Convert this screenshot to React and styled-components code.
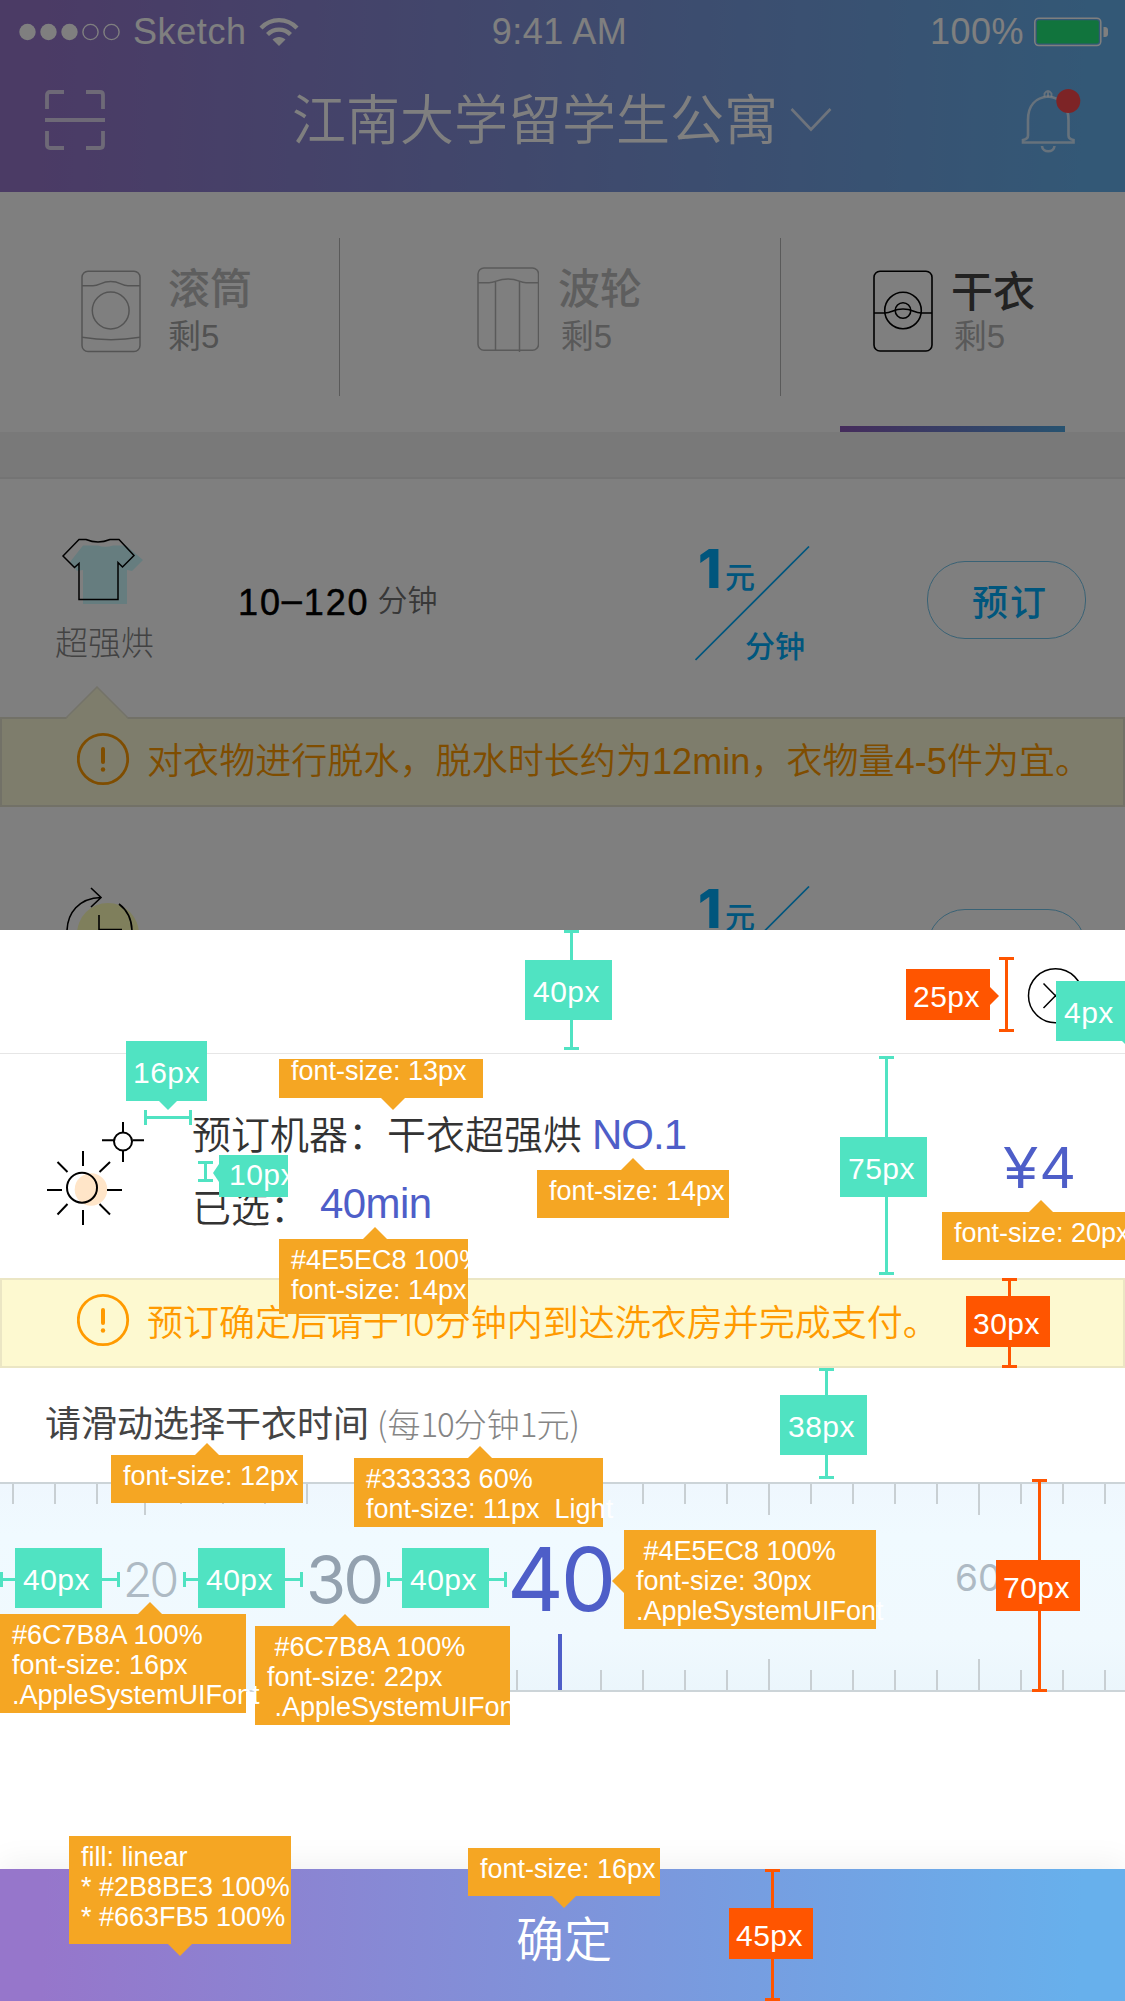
import React from "react";
import styled, { createGlobalStyle, css } from "styled-components";

const GlobalStyle = createGlobalStyle`
  * { box-sizing: border-box; }
  body {
    margin: 0;
    background: #fff;
    font-family: "Liberation Sans", "Noto Sans CJK SC", sans-serif;
  }
  svg { display: block; flex: none; }
`;

const BRAND_GRADIENT = "linear-gradient(92deg, #9676cb 4%, #7f93da 50%, #67b0ec 96%)";

const Screen = styled.div`
  position: relative;
  width: 1125px;
  height: 2001px;
  overflow: hidden;
  background: #fff;
  white-space: nowrap;
`;

/* ---------- page behind the sheet ---------- */

const Page = styled.div`
  position: relative;
  height: 930px;
  overflow: hidden;
  background: #fff;
`;

const Dim = styled.div`
  position: absolute;
  inset: 0;
  background: rgba(0, 0, 0, 0.5);
`;

const Header = styled.header`
  height: 192px;
  background: ${BRAND_GRADIENT};
  color: #fff;
`;

const StatusBar = styled.div`
  display: grid;
  grid-template-columns: 1fr auto 1fr;
  align-items: center;
  height: 62px;
  padding: 0 16px 0 19px;
  font-size: 36px;
  line-height: 62px;
`;

const StatusGroup = styled.div`
  display: flex;
  align-items: center;
  justify-content: ${(p) => (p.$end ? "flex-end" : "flex-start")};
  gap: ${(p) => p.$gap}px;
`;

const StatusText = styled.span`
  padding-top: 1px;
  margin-right: ${(p) => p.$right || 0}px;
  letter-spacing: ${(p) => p.$track || 0}px;
`;

const NavBar = styled.div`
  display: grid;
  grid-template-columns: 247px 1fr 104px;
  align-items: center;
  height: 116px;
  padding-left: 45px;
`;

const NavTitle = styled.h1`
  display: flex;
  align-items: center;
  gap: 12px;
  margin: 0;
  padding-top: 2px;
  font-size: 54px;
  line-height: 60px;
  font-weight: 350;
`;

const Tabs = styled.nav`
  display: grid;
  grid-template-columns: 340px 441px 344px;
  height: 240px;
`;

const Tab = styled.div`
  position: relative;
  display: flex;
  align-items: flex-start;
  gap: ${(p) => p.$gap}px;
  padding: ${(p) => p.$top}px 0 0 ${(p) => p.$left}px;

  &:not(:last-child)::after {
    content: "";
    position: absolute;
    right: 0;
    top: 46px;
    width: 1.5px;
    height: 158px;
    background: #b4b4b4;
  }
`;

const TabText = styled.div`
  display: flex;
  flex-direction: column;
  margin-top: ${(p) => p.$shift}px;
`;

const TabName = styled.span`
  font-size: 42px;
  line-height: 46px;
  font-weight: 500;
  color: ${(p) => (p.$active ? "#444" : "#bdbdbd")};
`;

const TabCount = styled.span`
  font-size: 33px;
  line-height: 40px;
  margin-top: ${(p) => p.$gap}px;
  color: ${(p) => p.$color};
`;

const ActiveBar = styled.div`
  position: absolute;
  left: 59px;
  bottom: 0;
  width: 225px;
  height: 6px;
  background: linear-gradient(90deg, #8b58b8, #4fa5e0);
`;

const Band = styled.div`
  height: 47px;
  background: #f2f2f2;
  border-bottom: 2px solid #e9e9e9;
`;

const Program = styled.section`
  display: grid;
  grid-template-columns: 208px 487px 232px auto;
  height: 238px;
`;

const ProgramIcon = styled.div`
  display: flex;
  flex-direction: column;
  align-items: flex-start;
  padding: ${(p) => p.$top}px 0 0 55px;
  font-size: 33px;
  line-height: 40px;
  font-weight: 300;
  color: #858585;

  span { margin: 18px 0 0 0; }
`;

const Duration = styled.div`
  display: flex;
  align-items: center;
  gap: 8px;
  height: 40px;
  margin: 102px 0 0 30px;
  font-size: 36px;
  line-height: 40px;
  letter-spacing: 1.9px;
  color: #000;
  -webkit-text-stroke: 0.5px #000;

  i {
    font-style: normal;
    vertical-align: 3px;
  }

  small {
    font-size: 30px;
    letter-spacing: 0;
    font-weight: 350;
    color: #707070;
    -webkit-text-stroke: 0;
  }
`;

const Price = styled.div`
  display: grid;
  grid-template-areas: "cell";
  width: 115px;
  height: 115px;
  margin-top: ${(p) => p.$top}px;
  color: #00acfb;
  font-size: 30px;
  line-height: 40px;
  font-weight: 500;

  > * { grid-area: cell; }
`;

const Amount = styled.span`
  display: flex;
  align-items: baseline;
  align-self: start;
  padding-left: 3px;

  b {
    width: 27px;
    font-family: Inter, sans-serif;
    font-size: 53px;
    line-height: 46px;
    font-weight: 800;
  }
`;

const Unit = styled.span`
  align-self: end;
  justify-self: end;
  margin: 0 5px -6px 0;
`;

const BookButton = styled.button`
  width: 159px;
  height: 78px;
  margin-top: ${(p) => p.$top}px;
  padding: 5px 0 0 7px;
  border: 1.5px solid #72c4ea;
  border-radius: 38px;
  background: none;
  color: #00acfb;
  font: 500 36px/74px "Liberation Sans", "Noto Sans CJK SC", sans-serif;
  letter-spacing: 2px;
`;

const Notice = styled.div`
  position: relative;
  display: flex;
  align-items: flex-start;
  gap: 16px;
  height: 90px;
  padding: 13px 0 0 75px;
  background: #fdf9d0;
  border: 2px solid #ebe6c4;
  color: #ff9a00;
  font-size: 36px;
  line-height: 54px;
  font-weight: 350;

  > span { padding-top: 3px; }

  ${(p) => p.$muted && css`
    background: #fdfbd9;
    border-color: #e4e2ce;
    letter-spacing: 0.07px;
  `}

  i {
    font-family: Inter, sans-serif;
    font-weight: 300;
    font-style: normal;
    letter-spacing: -0.4px;
  }
`;

const Pointer = styled.svg`
  position: absolute;
  left: 61px;
  top: -33px;
`;

/* ---------- booking sheet ---------- */

const Sheet = styled.main`
  display: flex;
  flex-direction: column;
  height: 1071px;
  background: #fff;
`;

const SheetTop = styled.div`
  display: flex;
  justify-content: flex-end;
  height: 124px;
  padding: 37px 41px 0 0;
  border-bottom: 1.5px solid #e6e6e6;
`;

const Order = styled.section`
  display: grid;
  grid-template-columns: 146px 812px auto;
  height: 224px;
  padding-left: 46px;
`;

const OrderText = styled.div`
  padding-top: 55px;
  font-size: 39px;
  line-height: 54px;
  font-weight: 350;
  color: #333;

  p {
    display: flex;
    margin: 0 0 19px;
  }
`;

const Accent = styled.span`
  margin: -${(p) => p.$lift || 0}px 0 0 ${(p) => p.$left}px;
  font-size: 42px;
  letter-spacing: ${(p) => p.$track || 0}px;
  color: #4e5ec8;
`;

const Total = styled.div`
  padding-top: 82px;
  font-size: 60px;
  line-height: 64px;
  letter-spacing: 4px;
  color: #4e5ec8;
`;

const Prompt = styled.div`
  display: flex;
  gap: 8px;
  height: 114px;
  padding: 30px 0 0 45px;
  font-size: 36px;
  line-height: 54px;
  color: #444;

  small {
    font-family: "Noto Sans CJK SC", sans-serif;
    font-size: 33px;
    line-height: 51px;
    font-weight: 300;
    color: #858585;
  }

  i {
    font-style: normal;
    letter-spacing: -1px;
  }
`;

const Ruler = styled.section`
  display: flex;
  flex-direction: column;
  justify-content: space-between;
  height: 210px;
  border-top: 2.5px solid #ccd4d8;
  border-bottom: 2.5px solid #ccd4d8;
  background: linear-gradient(180deg, #eff7fe 0%, #f0faff 25%, #f0f9fe 75%, #ebf6fc 100%);
`;

const Ticks = styled.div`
  display: flex;
  align-items: ${(p) => (p.$bottom ? "flex-end" : "flex-start")};
  gap: 40px;
  height: 32px;
  padding-left: 12px;
  overflow: visible;
`;

const Tick = styled.span`
  flex: none;
  width: 2px;
  height: ${(p) => (p.$long ? 31 : 20)}px;
  background: #c8cfd3;

  ${(p) => p.$nudge && css`
    margin: 0 -6px 0 6px;
  `}

  ${(p) => p.$current && css`
    width: 4px;
    height: 56px;
    margin-right: -2px;
    background: #4e5ec8;
  `}
`;

const Values = styled.div`
  display: grid;
  grid-template-columns: 183px 201px 448px auto;
  align-items: center;
  height: 100px;
  padding: 0 0 14px 123px;
`;

const Value = styled.span`
  font-family: Inter, sans-serif;
  font-size: ${(p) => p.$size}px;
  line-height: 1;
  margin-top: -${(p) => p.$lift || 0}px;
  letter-spacing: ${(p) => p.$track || 0}px;
  color: ${(p) => p.$color};
  font-weight: ${(p) => p.$weight || 400};
`;

const Spacer = styled.div`
  flex: 1;
`;

const Confirm = styled.button`
  height: 132px;
  padding: 3px 0 0 3px;
  border: 0;
  background: ${BRAND_GRADIENT};
  box-shadow: 0 -6px 30px rgba(0, 0, 0, 0.06);
  color: #fff;
  font: 350 48px/138px "Liberation Sans", "Noto Sans CJK SC", sans-serif;
  text-align: center;
`;

/* ---------- specification marks laid over the screen ---------- */

const TONES = { teal: "#50e3c2", red: "#ff5500", orange: "#f5a623" };

const TagBox = styled.div`
  position: absolute;
  left: ${(p) => p.$x}px;
  top: ${(p) => p.$y}px;
  width: ${(p) => p.$w}px;
  height: ${(p) => p.$h}px;
  overflow: ${(p) => (p.$clip ? "hidden" : "visible")};
  background: ${(p) => TONES[p.$tone]};
  color: #fff;
  white-space: pre;
  ${(p) => p.$tone === "orange"
    ? css`
        padding: 6px 0 0 12px;
        font-size: 27px;
        line-height: 30px;
      `
    : css`
        padding: ${p.$tone === "teal" ? "15px 0 0 8px" : "11px 0 0 7px"};
        font-size: 30px;
        line-height: 34px;
        letter-spacing: 0.5px;
      `}

  span {
    display: block;
    margin-top: ${(p) => p.$lift || 0}px;
    margin-left: ${(p) => p.$indent || 0}px;
  }
`;

const ARROWS = {
  up: "polygon(50% 0, 100% 100%, 0 100%)",
  down: "polygon(0 0, 100% 0, 50% 100%)",
  left: "polygon(0 50%, 100% 0, 100% 100%)",
  right: "polygon(0 0, 100% 50%, 0 100%)",
};

const Arrow = styled.div`
  position: absolute;
  left: ${(p) => p.$x}px;
  top: ${(p) => p.$y}px;
  width: ${(p) => p.$w}px;
  height: ${(p) => p.$h}px;
  background: ${(p) => TONES[p.$tone]};
  clip-path: ${(p) => ARROWS[p.$dir]};
`;

const Span = styled.div`
  position: absolute;
  left: ${(p) => p.$x}px;
  top: ${(p) => p.$y}px;
  color: ${(p) => TONES[p.$tone]};
  ${(p) => p.$vertical
    ? css`
        width: 15px;
        height: ${p.$len}px;
        border-top: 3px solid;
        border-bottom: 3px solid;
        background: linear-gradient(currentColor, currentColor) center / 3px 100% no-repeat;
      `
    : css`
        width: ${p.$len}px;
        height: 15px;
        border-left: 3px solid;
        border-right: 3px solid;
        background: linear-gradient(currentColor, currentColor) center / 100% 3px no-repeat;
      `}
`;

const SPANS = [
  { tone: "teal", x: 564, y: 930, len: 120, vertical: true },
  { tone: "red", x: 999, y: 957, len: 75, vertical: true },
  { tone: "teal", x: 144, y: 1110, len: 48 },
  { tone: "teal", x: 198, y: 1161, len: 21, vertical: true },
  { tone: "teal", x: 879, y: 1056, len: 219, vertical: true },
  { tone: "red", x: 1002, y: 1278, len: 90, vertical: true },
  { tone: "teal", x: 819, y: 1368, len: 111, vertical: true },
  { tone: "teal", x: 0, y: 1572, len: 120 },
  { tone: "teal", x: 183, y: 1572, len: 120 },
  { tone: "teal", x: 387, y: 1572, len: 120 },
  { tone: "red", x: 1032, y: 1479, len: 213, vertical: true },
  { tone: "red", x: 765, y: 1869, len: 132, vertical: true },
];

const TAGS = [
  { tone: "teal", x: 525, y: 960, w: 87, h: 60, text: "40px" },
  { tone: "red", x: 906, y: 969, w: 84, h: 51, text: "25px", arrow: ["right", 990, 987, 9, 18] },
  { tone: "teal", x: 1056, y: 981, w: 75, h: 60, text: "4px", arrow: ["down", 1122, 1041, 18, 9] },
  { tone: "teal", x: 126, y: 1041, w: 81, h: 60, indent: -1, text: "16px", arrow: ["down", 159, 1101, 18, 9] },
  { tone: "orange", x: 279, y: 1059, w: 204, h: 39, lift: -9, text: "font-size: 13px", arrow: ["down", 381, 1098, 24, 12] },
  { tone: "teal", x: 219, y: 1155, w: 69, h: 42, lift: -12, indent: 2, clip: true, text: "10px", arrow: ["left", 213, 1164, 6, 18] },
  { tone: "orange", x: 537, y: 1170, w: 192, h: 48, text: "font-size: 14px", arrow: ["up", 621, 1158, 24, 12] },
  { tone: "teal", x: 840, y: 1137, w: 87, h: 60, text: "75px" },
  { tone: "orange", x: 942, y: 1212, w: 192, h: 48, text: "font-size: 20px", arrow: ["up", 1029, 1200, 24, 12] },
  { tone: "orange", x: 279, y: 1239, w: 189, h: 75, clip: true, text: "#4E5EC8 100%\nfont-size: 14px", arrow: ["up", 363, 1227, 24, 12] },
  { tone: "red", x: 966, y: 1296, w: 84, h: 51, text: "30px" },
  { tone: "teal", x: 780, y: 1395, w: 87, h: 60, text: "38px" },
  { tone: "orange", x: 111, y: 1455, w: 192, h: 48, text: "font-size: 12px", arrow: ["up", 195, 1443, 24, 12] },
  { tone: "orange", x: 354, y: 1458, w: 249, h: 69, text: "#333333 60%\nfont-size: 11px  Light", arrow: ["up", 468, 1446, 24, 12] },
  { tone: "teal", x: 15, y: 1548, w: 87, h: 60, text: "40px" },
  { tone: "teal", x: 198, y: 1548, w: 87, h: 60, text: "40px" },
  { tone: "teal", x: 402, y: 1548, w: 87, h: 60, text: "40px" },
  { tone: "orange", x: 255, y: 1626, w: 255, h: 99, clip: true, text: " #6C7B8A 100%\nfont-size: 22px\n .AppleSystemUIFont", arrow: ["up", 333, 1614, 24, 12] },
  { tone: "orange", x: 0, y: 1614, w: 246, h: 99, text: "#6C7B8A 100%\nfont-size: 16px\n.AppleSystemUIFont", arrow: ["up", 138, 1602, 24, 12] },
  { tone: "orange", x: 624, y: 1530, w: 252, h: 99, text: " #4E5EC8 100%\nfont-size: 30px\n.AppleSystemUIFont", arrow: ["left", 612, 1569, 12, 24] },
  { tone: "red", x: 996, y: 1560, w: 84, h: 51, text: "70px" },
  { tone: "orange", x: 69, y: 1836, w: 222, h: 108, text: "fill: linear\n* #2B8BE3 100%\n* #663FB5 100%", arrow: ["down", 168, 1944, 24, 12] },
  { tone: "orange", x: 468, y: 1848, w: 192, h: 48, text: "font-size: 16px", arrow: ["down", 552, 1896, 24, 12] },
  { tone: "red", x: 729, y: 1908, w: 84, h: 51, text: "45px" },
];

function SpecMarks() {
  return (
    <>
      {SPANS.map((s, i) => (
        <Span key={i} $tone={s.tone} $x={s.x} $y={s.y} $len={s.len} $vertical={s.vertical} />
      ))}
      {TAGS.map((t, i) => (
        <React.Fragment key={i}>
          <TagBox
            $tone={t.tone}
            $x={t.x}
            $y={t.y}
            $w={t.w}
            $h={t.h}
            $lift={t.lift}
            $indent={t.indent}
            $clip={t.clip}
          >
            <span>{t.text}</span>
          </TagBox>
          {t.arrow && (
            <Arrow $tone={t.tone} $dir={t.arrow[0]} $x={t.arrow[1]} $y={t.arrow[2]} $w={t.arrow[3]} $h={t.arrow[4]} />
          )}
        </React.Fragment>
      ))}
    </>
  );
}

/* ---------- icons ---------- */

const SignalDots = () => (
  <svg width="102" height="18" viewBox="0 0 102 18">
    {[8.5, 29.5, 50.5].map((x) => <circle key={x} cx={x} cy="9" r="8.2" fill="#fff" />)}
    {[71.5, 92.5].map((x) => <circle key={x} cx={x} cy="9" r="7.6" fill="none" stroke="#fff" strokeWidth="1.4" />)}
  </svg>
);

const WifiIcon = () => (
  <svg width="40" height="30" viewBox="0 0 40 30">
    <path d="M2 11C12 0.500 28 0.500 38 11" fill="none" stroke="#fff" strokeWidth="4.200" />
    <path d="M8.500 17.500C15 11 25 11 31.500 17.500" fill="none" stroke="#fff" strokeWidth="4.200" />
    <path d="M13.500 22.500C17 19 23 19 26.500 22.500L20 29Z" fill="#fff" />
  </svg>
);

const BatteryIcon = () => (
  <svg width="75" height="30" viewBox="0 0 75 30">
    <rect x="0.800" y="1.200" width="66" height="27.400" rx="4" fill="none" stroke="#fff" strokeWidth="1.500" />
    <rect x="2.800" y="3.200" width="62" height="23.400" rx="2" fill="#23e97b" />
    <path d="M69.500 10H71c1.700 0 3 1.300 3 3v4c0 1.700-1.300 3-3 3h-1.500z" fill="#fff" />
  </svg>
);

const ScanIcon = () => (
  <svg width="60" height="61" viewBox="0 0 60 61" fill="none" stroke="#fff" strokeOpacity="0.68" strokeWidth="3.800">
    <path d="M2 19V5Q2 2 5 2H19M41 2H55Q58 2 58 5V19M58 41V55Q58 58 55 58H41M19 58H5Q2 58 2 55V41M0 30H60" />
  </svg>
);

const ChevronIcon = () => (
  <svg width="42" height="26" viewBox="0 0 42 26" fill="none" stroke="#fff" strokeOpacity="0.75" strokeWidth="2.600">
    <path d="M1.500 1L21 21.500L40.500 1" />
  </svg>
);

const BellIcon = () => (
  <svg width="62" height="66" viewBox="0 0 62 66">
    <g fill="none" stroke="#fff" strokeOpacity="0.68" strokeWidth="2.600">
      <path d="M7 48.500V33C7 18 15 10.500 27 9.500C39 10.500 47.500 18 47.500 33V48.500C47.500 51 49.500 52.500 52.500 53V55.500H2V53C5 52.500 7 51 7 48.500" />
      <path d="M23.500 10V6.500Q27 1.500 30.500 6.500V10M27 4V10" strokeWidth="1.800" />
      <path d="M21 59C21.500 66 33 66 33.500 59" />
    </g>
    <circle cx="47.300" cy="14" r="12" fill="#fa484c" />
  </svg>
);

const DrumIcon = () => (
  <svg width="60" height="83" viewBox="0 0 60 83" fill="none" stroke="#a9a9a9" strokeWidth="1.500">
    <rect x="1" y="1.200" width="58" height="80.300" rx="6" />
    <path d="M1 15.700H12C19 15.700 20 11.500 29.700 11.500S40 15.700 47 15.700H59M1 67.300Q30 72 59 67.300" />
    <circle cx="29.700" cy="40.500" r="18.400" />
  </svg>
);

const PulsatorIcon = () => (
  <svg width="62" height="86" viewBox="0 0 62 86" fill="none" stroke="#b4b4b4" strokeWidth="1.500">
    <rect x="1" y="1" width="60.500" height="82.300" rx="6" />
    <path d="M1 15.700H12C19 15.700 20 12 31 12S42 15.700 49 15.700H62M18.500 14V83.500M42.500 14V85" />
  </svg>
);

const DryerIcon = () => (
  <svg width="60" height="83" viewBox="0 0 60 83" fill="none" stroke="#000" strokeWidth="1.600">
    <rect x="1" y="1.200" width="58" height="79.800" rx="6" />
    <path d="M1 43H12C19 43 20 39 30 39S41 43 48 43H59" />
    <circle cx="30" cy="40.500" r="18.300" />
    <circle cx="30" cy="40.500" r="7.800" />
  </svg>
);

const ShirtIcon = () => (
  <svg width="90" height="68" viewBox="0 0 90 68">
    <path d="M28 7.500H43Q50 10 58 7.500H71L88 22L77 33L72 32V66H28V32L22 33L15 24Z" fill="#ccfaff" />
    <path d="M8 18L24 1.500H31Q43 6.500 55 1.500H64L79 17.500L67.500 29L63 24.500V61.500H24V25.500L19.500 29.500Z" fill="none" stroke="#000" strokeWidth="1.500" />
  </svg>
);

const TimerIcon = () => (
  <svg width="90" height="68" viewBox="0 0 90 68">
    <circle cx="53" cy="48" r="31" fill="#ffffb8" />
    <g fill="none" stroke="#000" strokeWidth="1.600">
      <path d="M36 2L46 11.500L36 21M46 11.500C24 12 12 27 12 46M64 18C72 24 77 34 77 46M44 29V43.500H67" />
    </g>
  </svg>
);

const AlertIcon = () => (
  <svg width="54" height="54" viewBox="0 0 54 54">
    <circle cx="26" cy="27" r="24.700" fill="none" stroke="#ff9a00" strokeWidth="2.800" />
    <path d="M26 17V30" stroke="#ff9a00" strokeWidth="4" strokeLinecap="round" />
    <circle cx="26" cy="37.500" r="2.200" fill="#ff9a00" />
  </svg>
);

const CloseIcon = () => (
  <svg width="57" height="57" viewBox="0 0 57 57" fill="none" stroke="#000" strokeWidth="1.500">
    <circle cx="28.500" cy="28.700" r="27" />
    <path d="M16.500 16.500L40.500 41M40.500 16.500L16.500 41" />
  </svg>
);

const SunIcon = () => (
  <svg width="100" height="224" viewBox="46 1054 100 224">
    <circle cx="91" cy="1189.500" r="16.300" fill="#ffe5c8" />
    <g fill="none" stroke="#000" strokeWidth="2">
      <circle cx="82" cy="1187.700" r="15" />
      <circle cx="123" cy="1141.500" r="9" />
      <path d="M123 1122V1132M123 1151V1162M102 1140.300H114M132.500 1140.300H144" />
      <path d="M83 1151V1166M83 1210V1225M47 1190H62M107 1190H122M57.500 1162L67.500 1172M110 1162L99.500 1172M57.500 1214.500L67.500 1204M110 1214.500L99.500 1204" />
    </g>
  </svg>
);

/* ---------- pieces ---------- */

const Slash = () => (
  <svg width="115" height="115" viewBox="0 0 115 115">
    <path d="M0.500 114L114 0.500" stroke="#00acfb" strokeWidth="1.700" />
  </svg>
);

function PerMinute({ top }) {
  return (
    <Price $top={top}>
      <Slash />
      <Amount><b>1</b>元</Amount>
      <Unit>分钟</Unit>
    </Price>
  );
}

const TICKS = Array.from({ length: 27 }, (_, i) => i);

function TickRow({ bottom }) {
  return (
    <Ticks $bottom={bottom}>
      {TICKS.map((i) => (
        <Tick
          key={i}
          $long={i % 5 === 3}
          $nudge={i === 3 || i === 8}
          $current={bottom && i === 13}
        />
      ))}
    </Ticks>
  );
}

export default function App() {
  return (
    <Screen>
      <GlobalStyle />
      <Page>
        <Header>
          <StatusBar>
            <StatusGroup $gap={12}>
              <SignalDots />
              <StatusText $track={0.6}>Sketch</StatusText>
              <WifiIcon />
            </StatusGroup>
            <StatusText $track={0.5} $right={9}>9:41 AM</StatusText>
            <StatusGroup $end $gap={10}>
              <StatusText $track={0.5}>100%</StatusText>
              <BatteryIcon />
            </StatusGroup>
          </StatusBar>
          <NavBar>
            <ScanIcon />
            <NavTitle>
              江南大学留学生公寓
              <ChevronIcon />
            </NavTitle>
            <BellIcon />
          </NavBar>
        </Header>

        <Tabs>
          <Tab $left={81} $top={78} $gap={27}>
            <DrumIcon />
            <TabText $shift={-3}>
              <TabName>滚筒</TabName>
              <TabCount $gap={4} $color="#a4a4a4">剩5</TabCount>
            </TabText>
          </Tab>
          <Tab $left={137} $top={75} $gap={19}>
            <PulsatorIcon />
            <TabText $shift={0}>
              <TabName>波轮</TabName>
              <TabCount $gap={4} $color="#b2b2b2">&#8202;剩5</TabCount>
            </TabText>
          </Tab>
          <Tab $left={92} $top={78} $gap={18}>
            <DryerIcon />
            <TabText $shift={0}>
              <TabName $active>干衣</TabName>
              <TabCount $gap={1} $color="#b2b2b2">&#8202;剩5</TabCount>
            </TabText>
            <ActiveBar />
          </Tab>
        </Tabs>
        <Band />

        <Program>
          <ProgramIcon $top={59}>
            <ShirtIcon />
            <span>超强烘</span>
          </ProgramIcon>
          <Duration>
            <span>10<i>–</i>120</span>
            <small>分钟</small>
          </Duration>
          <PerMinute top={67} />
          <BookButton $top={82}>预订</BookButton>
        </Program>
        <Notice $muted>
          <Pointer width="70" height="33" viewBox="0 0 70 33">
            <path d="M3 33L34 1L65 33Z" fill="#fdfbd9" />
            <path d="M3 32L34 1L65 32" fill="none" stroke="#e8e6d2" strokeWidth="1.500" />
          </Pointer>
          <AlertIcon />
          <span>对衣物进行脱水，脱水时长约为12min，衣物量4-5件为宜。</span>
        </Notice>
        <Program>
          <ProgramIcon $top={79}><TimerIcon /></ProgramIcon>
          <span />
          <PerMinute top={79} />
          <BookButton $top={102} />
        </Program>
        <Dim />
      </Page>

      <Sheet>
        <SheetTop><CloseIcon /></SheetTop>
        <Order>
          <SunIcon />
          <OrderText>
            <p>预订机器：干衣超强烘<Accent $left={10} $lift={1} $track={-1}>NO.1</Accent></p>
            <p>已选：<Accent $left={11} $lift={5} $track={-0.6}>40min</Accent></p>
          </OrderText>
          <Total>¥4</Total>
        </Order>
        <Notice>
          <AlertIcon />
          <span>预订确定后请于<i>10</i>分钟内到达洗衣房并完成支付。</span>
        </Notice>
        <Prompt>
          请滑动选择干衣时间
          <small>(每<i>10</i>分钟<i>1</i>元)</small>
        </Prompt>
        <Ruler>
          <TickRow />
          <Values>
            <Value $size={48} $color="#aebac4" $weight={300} $track={-3}>20</Value>
            <Value $size={65} $color="#93a1af" $lift={2} $track={-3}>30</Value>
            <Value $size={88} $color="#4e5ec8" $lift={3} $track={-3}>40</Value>
            <Value $size={37} $color="#aebac4" $lift={6}>60</Value>
          </Values>
          <TickRow bottom />
        </Ruler>
        <Spacer />
        <Confirm>确定</Confirm>
      </Sheet>

      <SpecMarks />
    </Screen>
  );
}
